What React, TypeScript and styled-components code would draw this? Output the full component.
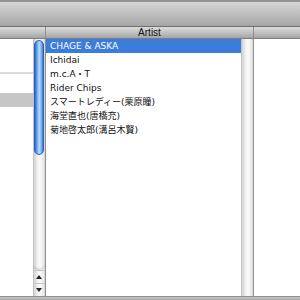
import React from "react";
import styled, { createGlobalStyle } from "styled-components";

const Global = createGlobalStyle`
  html, body { margin: 0; padding: 0; background: #fff; }
  body { font-family: "Liberation Sans", "Noto Sans CJK JP", sans-serif; }
`;

const Window = styled.div`
  width: 300px;
  height: 300px;
  display: flex;
  flex-direction: column;
  overflow: hidden;
  background: #fff;
`;

const Toolbar = styled.div`
  height: 24px;
  flex: none;
  border-top: 2px solid #939393;
  border-bottom: 1px solid #6e6e6e;
  background: linear-gradient(#d6d6d6, #c0c0c0 45%, #a6a6a6);
`;

const Browser = styled.div`
  flex: 1;
  display: flex;
  min-height: 0;
`;

const Column = styled.div<{ $w?: number }>`
  display: flex;
  flex-direction: column;
  ${(p) => (p.$w ? `width: ${p.$w}px; flex: none;` : "flex: 1;")}
  border-right: 1px solid #8f8f8f;
  &:last-child { border-right: none; }
`;

const Header = styled.div`
  height: 11px;
  flex: none;
  border-bottom: 1px solid #7d7d7d;
  background: linear-gradient(#dcdcdc, #c2c2c2 50%, #a4a4a4);
  font-size: 10px;
  line-height: 11px;
  color: #111;
  text-align: center;
  overflow: hidden;
`;

const Body = styled.div`
  flex: 1;
  display: flex;
  min-height: 0;
`;

const List = styled.div`
  flex: 1;
  display: flex;
  flex-direction: column;
  overflow: hidden;
  background: #fff;
`;

const Row = styled.div<{ $sel?: "blue" | "gray" }>`
  height: 14px;
  flex: none;
  box-sizing: border-box;
  padding-left: 4px;
  font-family: "DejaVu Sans", "Noto Sans CJK JP", sans-serif;
  font-size: 9px;
  line-height: 14px;
  white-space: nowrap;
  color: ${(p) => (p.$sel === "blue" ? "#fff" : "#111")};
  background: ${(p) =>
    p.$sel === "blue" ? "#3b7ddd" : p.$sel === "gray" ? "#c6c6c6" : "transparent"};
`;

const Divider = styled.div`
  height: 2px;
  flex: none;
  background: #d9d9d9;
`;

const Spacer = styled.div<{ $h: number }>`
  height: ${(p) => p.$h}px;
  flex: none;
`;

const Scrollbar = styled.div`
  width: 12px;
  flex: none;
  display: flex;
  flex-direction: column;
  background: linear-gradient(90deg, #b9b9b9, #d6d6d6 12%, #f6f6f6 45%, #fafafa 60%, #e6e6e6 92%, #d0d0d0);
`;

const Track = styled.div`
  flex: 1;
  position: relative;
  border-bottom-left-radius: 6px 5px;
  border-bottom-right-radius: 6px 5px;
  box-shadow: inset 0 -2px 2px -1px rgba(0, 0, 0, 0.18);
`;

const Thumb = styled.div`
  position: absolute;
  left: 1px;
  right: 1px;
  border-radius: 5px;
  border: 1px solid #2d5fb4;
  box-sizing: border-box;
  background: linear-gradient(90deg, #2f69c8, #5a9ae8 20%, #9fcdf7 45%, #b5dbfb 55%, #74aef0 80%, #3c78d2);
`;

const ArrowButton = styled.div`
  height: 12px;
  flex: none;
  display: flex;
  align-items: center;
  justify-content: center;
  border-top: 1px solid #c4c4c4;
`;

const Triangle = styled.div<{ $down?: boolean }>`
  width: 0;
  height: 0;
  border-left: 3px solid transparent;
  border-right: 3px solid transparent;
  ${(p) =>
    p.$down ? "border-top: 4px solid #222;" : "border-bottom: 4px solid #222;"}
`;

const BottomBar = styled.div`
  height: 3px;
  flex: none;
  border-top: 1px solid #8f8f8f;
  background: linear-gradient(#c8c8c8, #a9a9a9);
`;

const artists = [
  "CHAGE & ASKA",
  "Ichidai",
  "m.c.A・T",
  "Rider Chips",
  "スマートレディー(栗原瞳)",
  "海堂直也(唐橋充)",
  "菊地啓太郎(溝呂木賢)",
];

export default function App() {
  return (
    <Window>
      <Global />
      <Toolbar />
      <Browser>
        <Column $w={45}>
          <Header />
          <Body>
            <List>
              <Spacer $h={33} />
              <Divider />
              <Spacer $h={19} />
              <Row $sel="gray" />
            </List>
            <Scrollbar>
              <Track>
                <Thumb style={{ top: 1, height: 115 }} />
              </Track>
              <ArrowButton>
                <Triangle />
              </ArrowButton>
              <ArrowButton>
                <Triangle $down />
              </ArrowButton>
            </Scrollbar>
          </Body>
        </Column>
        <Column $w={207}>
          <Header>Artist</Header>
          <Body>
            <List>
              {artists.map((a, i) => (
                <Row key={a} $sel={i === 0 ? "blue" : undefined}>
                  {a}
                </Row>
              ))}
            </List>
            <Scrollbar />
          </Body>
        </Column>
        <Column>
          <Header />
          <Body>
            <List />
          </Body>
        </Column>
      </Browser>
      <BottomBar />
    </Window>
  );
}
